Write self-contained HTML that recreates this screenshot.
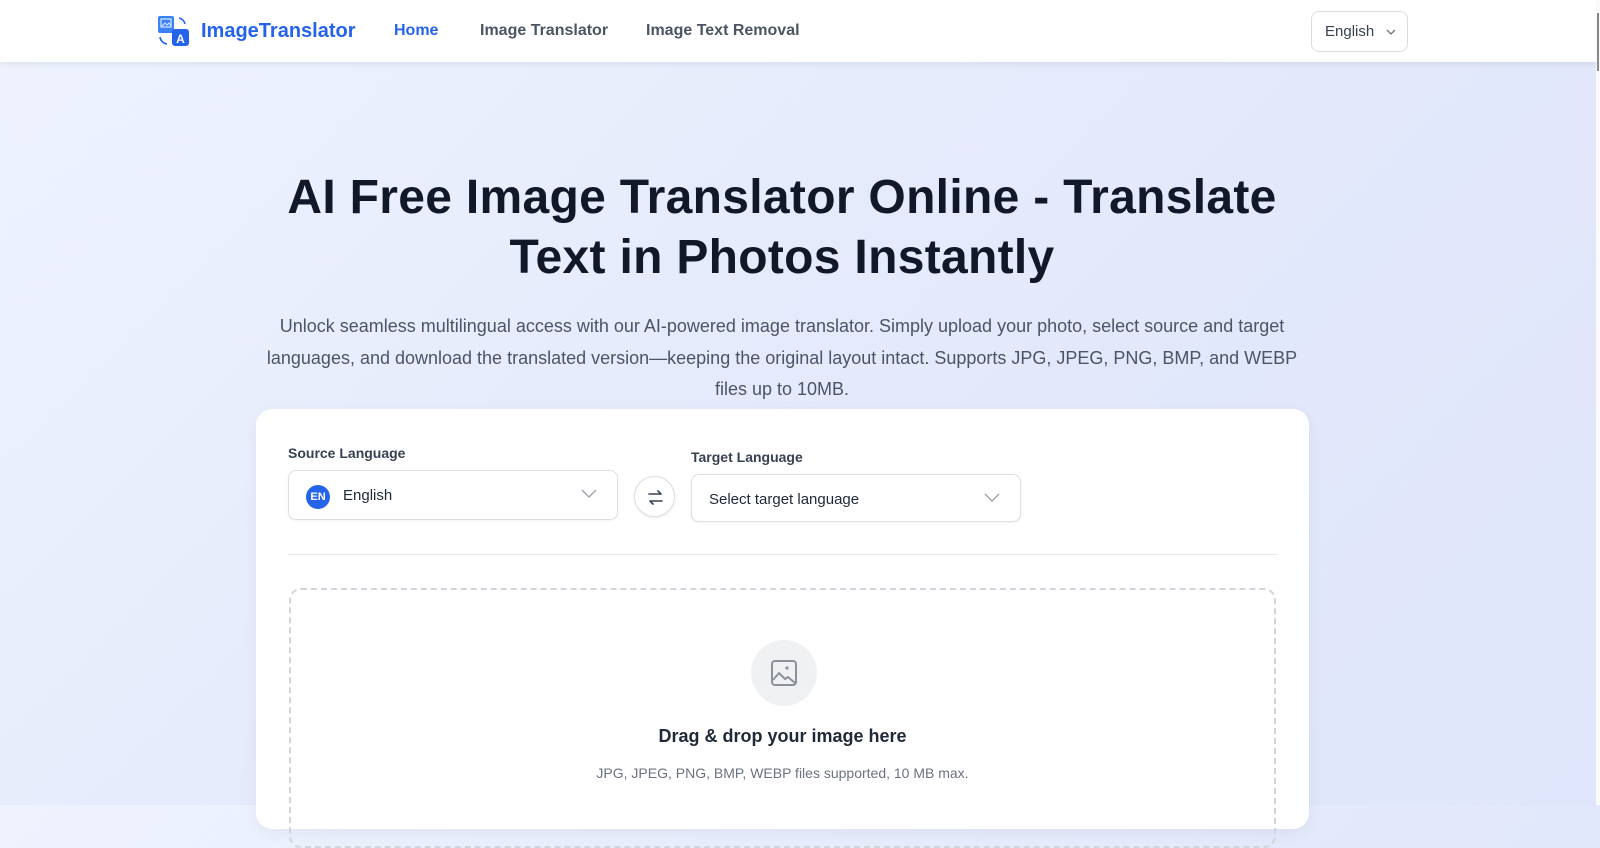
<!DOCTYPE html>
<html><head><meta charset="utf-8"><style>
*{box-sizing:border-box;margin:0;padding:0}
body{width:1600px;height:805px;overflow:hidden;font-family:"Liberation Sans",sans-serif;background:linear-gradient(135deg,#eef3fe,#e3e8fb 60%,#dfe5fa);position:relative}
.sb{position:absolute;right:0;top:0;width:4px;height:805px;background:#fafafa}
.sb i{position:absolute;left:1px;top:13px;width:2px;height:58px;background:#888}
.nav{position:absolute;left:0;top:0;width:1596px;height:62px;background:#fff;box-shadow:0 2px 6px rgba(0,0,0,.08)}
.logo{position:absolute;left:157px;top:15px;display:flex;align-items:center;gap:10px;color:#2563eb;font-size:20px;font-weight:600}
.links a{position:absolute;top:22px;font-size:16px;font-weight:600;color:#4b5563;text-decoration:none}
.lang{position:absolute;left:1311px;top:11px;width:97px;height:41px;border:1px solid #d9dde3;border-radius:8px;font-size:15px;color:#374151;padding:11px 0 0 13px}
h1{position:absolute;left:0;width:1564px;top:168px;text-align:center;font-size:48px;line-height:60px;font-weight:700;color:#111827;letter-spacing:0.3px}
p.d{position:absolute;left:262px;width:1040px;top:311px;text-align:center;font-size:18px;line-height:31.5px;color:#4b5563}
.card{position:absolute;left:256px;top:409px;width:1053px;height:420px;background:#fff;border-radius:16px;box-shadow:0 4px 16px rgba(0,0,0,.05)}
.lbl{position:absolute;font-size:14px;font-weight:600;color:#374151}
.sel{position:absolute;height:50px;border:1px solid #dcdfe4;border-radius:8px;box-shadow:0 1px 3px rgba(0,0,0,.06);font-size:15px;color:#1f2937}
.chev{position:absolute;right:20px;top:18px}
.swap{position:absolute;left:378px;top:67px;width:41px;height:41px;border-radius:50%;border:1px solid #dcdfe4;background:#fff;box-shadow:0 1px 3px rgba(0,0,0,.08)}
.hr{position:absolute;left:32px;right:32px;top:145px;border-top:1px solid #e5e7eb}
.drop{position:absolute;left:33px;top:179px;width:987px;height:260px;border:2px dashed #d1d5db;border-radius:12px}
</style></head><body>
<div class="nav">
 <div class="logo"><svg width="34" height="32" viewBox="0 0 34 32"><rect x="1" y="1" width="16" height="17" rx="2" fill="#3b82f6"/><rect x="4" y="4" width="10" height="8" fill="none" stroke="#dbeafe" stroke-width="1.2"/><path d="M5 11l3-3 2 2 2-2 2 3" stroke="#dbeafe" fill="none" stroke-width="1"/><rect x="15" y="14" width="17" height="17" rx="3" fill="#2563eb"/><text x="23.5" y="28" font-size="12" fill="#fff" text-anchor="middle" font-family="Liberation Sans" font-weight="700">A</text><path d="M22 3a8 8 0 0 1 6 6M3 22a8 8 0 0 0 7 7" stroke="#2563eb" fill="none" stroke-width="1.6"/></svg><span>ImageTranslator</span></div>
 <div class="links"><a style="left:394px;color:#2563eb">Home</a><a style="left:480px">Image Translator</a><a style="left:646px">Image Text Removal</a></div>
 <div class="lang">English <svg width="10" height="6" style="margin-left:8px;vertical-align:middle" viewBox="0 0 10 6"><path d="M1 1l4 4 4-4" stroke="#6b7280" fill="none" stroke-width="1.3"/></svg></div>
</div>
<div class="sb"><i></i></div>
<h1>AI Free Image Translator Online - Translate<br>Text in Photos Instantly</h1>
<p class="d">Unlock seamless multilingual access with our AI-powered image translator. Simply upload your photo, select source and target languages, and download the translated version—keeping the original layout intact. Supports JPG, JPEG, PNG, BMP, and WEBP files up to 10MB.</p>
<div class="card">
 <div class="lbl" style="left:32px;top:36px">Source Language</div>
 <div class="sel" style="left:32px;top:61px;width:330px"><span style="position:absolute;left:17px;top:14px;width:24px;height:24px;border-radius:50%;background:#2563eb;color:#fff;font-size:11px;font-weight:700;text-align:center;line-height:24px">EN</span><span style="position:absolute;left:54px;top:16px">English</span><svg class="chev" width="16" height="10" viewBox="0 0 16 10"><path d="M1 1l7 7 7-7" stroke="#9ca3af" fill="none" stroke-width="1.4"/></svg></div>
 <div class="swap"><svg width="41" height="41" viewBox="0 0 41 41"><path d="M14 17h12l-3-3M27 24H15l3 3" stroke="#374151" fill="none" stroke-width="1.6" stroke-linecap="round" stroke-linejoin="round"/></svg></div>
 <div class="lbl" style="left:435px;top:40px">Target Language</div>
 <div class="sel" style="left:435px;top:65px;width:330px;height:48px"><span style="position:absolute;left:17px;top:16px">Select target language</span><svg class="chev" width="16" height="10" viewBox="0 0 16 10"><path d="M1 1l7 7 7-7" stroke="#9ca3af" fill="none" stroke-width="1.4"/></svg></div>
 <div class="hr"></div>
 <div class="drop">
  <div style="position:absolute;left:460px;top:50px;width:66px;height:66px;border-radius:50%;background:#f0f1f3"><svg width="66" height="66" viewBox="0 0 66 66"><rect x="21" y="21" width="24" height="24" rx="3" fill="none" stroke="#8b929c" stroke-width="2"/><circle cx="36" cy="28" r="1.6" fill="#8b929c"/><path d="M22 40l6-7 6 6 3-2 7 6" fill="none" stroke="#8b929c" stroke-width="2" stroke-linejoin="round"/></svg></div>
  <div style="position:absolute;left:0;right:0;top:136px;text-align:center;font-size:18px;font-weight:600;color:#1f2937">Drag &amp; drop your image here</div>
  <div style="position:absolute;left:0;right:0;top:175px;text-align:center;font-size:14px;color:#6b7280">JPG, JPEG, PNG, BMP, WEBP files supported, 10 MB max.</div>
 </div>
</div>
</body></html>
